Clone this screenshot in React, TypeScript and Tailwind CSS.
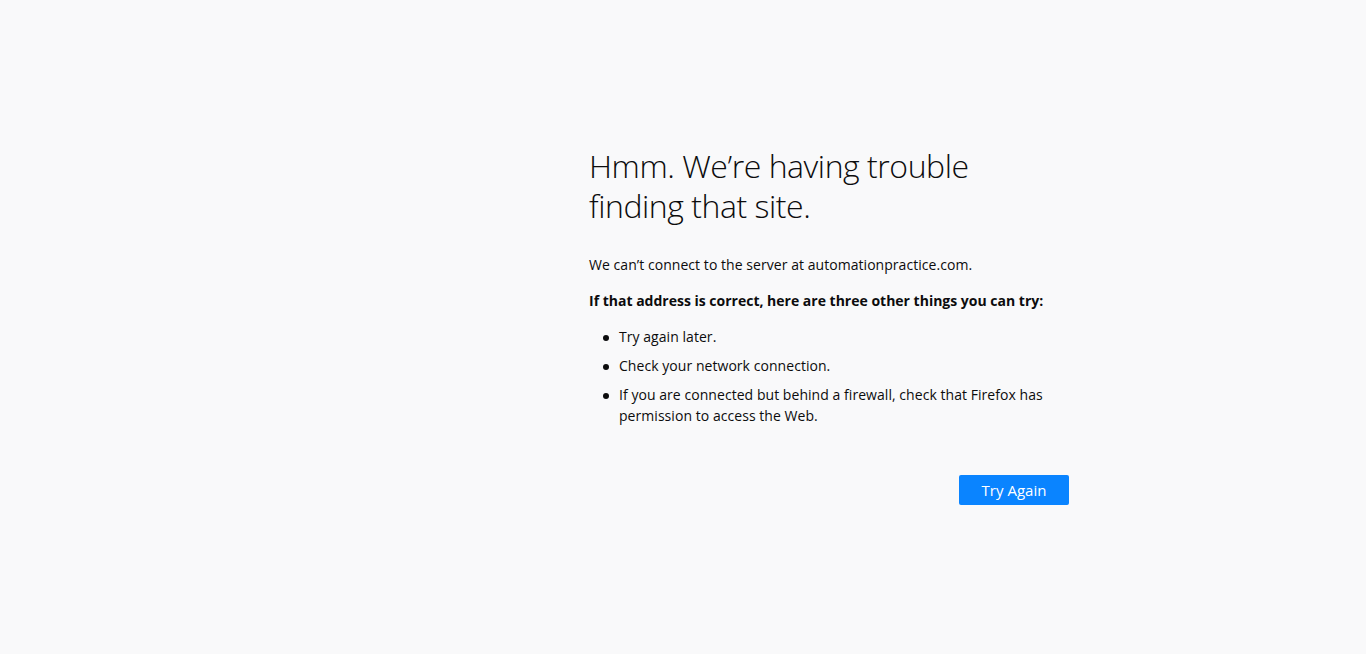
import React from "react";

function Item({ children }: { children: React.ReactNode }) {
  return (
    <li className="flex">
      <span className="w-[30px] shrink-0 flex justify-end pr-[10px] pt-[9px]">
        <span className="block w-[6px] h-[6px] rounded-full bg-[#0c0c0d]" />
      </span>
      <span>{children}</span>
    </li>
  );
}

export default function App() {
  return (
    <div
      className="w-full h-[654px] bg-[#f9f9fa] text-[#0c0c0d] flex justify-center"
      style={{ fontFamily: '"Open Sans", "Noto Sans", sans-serif' }}
    >
      <div className="pl-[292px] pt-[146px]">
        <div className="w-[480px]">
          <h1 className="w-[400px] text-[32px] font-light leading-[40px] m-0 tracking-[-0.45px]">
            Hmm. We’re having trouble finding that site.
          </h1>
          <p className="mt-[28px] text-[14px] leading-[21px] tracking-[0.05px]">
            We can’t connect to the server at automationpractice.com.
          </p>
          <p className="mt-[15px] text-[14px] leading-[21px] font-bold whitespace-nowrap">
            If that address is correct, here are three other things you can try:
          </p>
          <ul className="mt-[15px] text-[14px] leading-[21px] tracking-[0.05px] flex flex-col gap-[8px]">
            <Item>Try again later.</Item>
            <Item>Check your network connection.</Item>
            <Item>
              If you are connected but behind a firewall, check that Firefox has permission to access
              the Web.
            </Item>
          </ul>
          <div className="flex justify-end mt-[49px]">
            <button className="w-[110px] h-[30px] bg-[#0a84ff] text-white text-[15px] rounded-[2px]">
              Try Again
            </button>
          </div>
        </div>
      </div>
    </div>
  );
}
